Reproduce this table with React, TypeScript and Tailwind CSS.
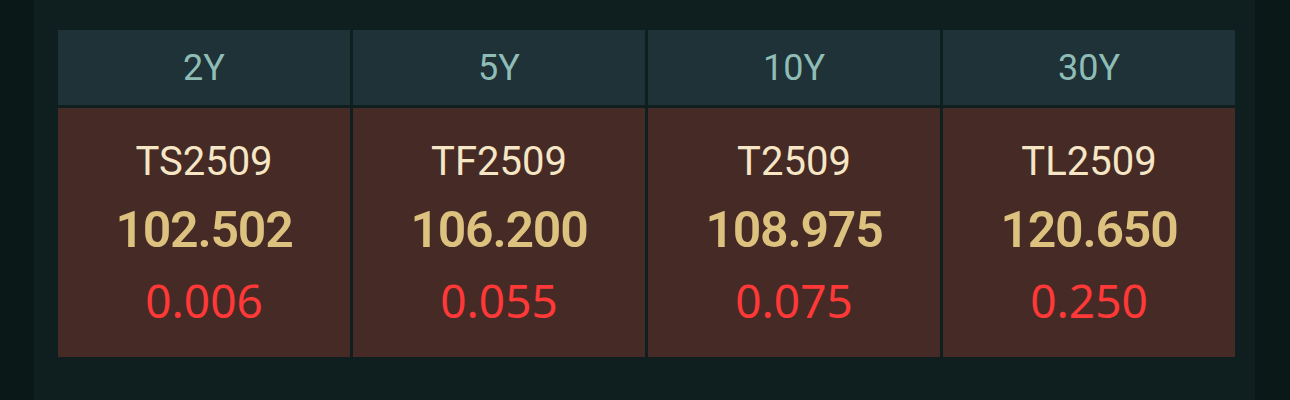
const bonds = [
  { tenor: "2Y", code: "TS2509", price: "102.502", change: "0.006" },
  { tenor: "5Y", code: "TF2509", price: "106.200", change: "0.055" },
  { tenor: "10Y", code: "T2509", price: "108.975", change: "0.075" },
  { tenor: "30Y", code: "TL2509", price: "120.650", change: "0.250" },
];

export default function App() {
  return (
    <div
      className="flex h-[400px] w-[1290px] bg-[#0a1818]"
      style={{ fontFamily: "Roboto, 'Noto Sans', sans-serif" }}
    >
      <div className="w-[34px] bg-[#0a1818]" />
      <div className="flex-1 bg-[#0f1e1e] pl-[24px] pr-[20px] pt-[30px]">
        <div className="grid grid-cols-4 gap-[3px]">
          {bonds.map((b) => (
            <div
              key={b.tenor}
              className="flex h-[75px] items-center justify-center bg-[#1e3238] text-[36px] text-[#8fbdb6]"
            >
              {b.tenor}
            </div>
          ))}
          {bonds.map((b) => (
            <div
              key={b.code}
              className="flex h-[249px] flex-col items-center bg-[#452a25] pt-[30px]"
            >
              <span className="text-[40px] leading-[48px] text-[#f6e6c6]">
                {b.code}
              </span>
              <span className="mt-[10px] text-[50px] font-semibold leading-[68px] tracking-[-1.2px] text-[#dcc17f]">
                {b.price}
              </span>
              <span className="font-['Noto_Sans',sans-serif] text-[46px] leading-[72px] text-[#ff3838]">
                {b.change}
              </span>
            </div>
          ))}
        </div>
      </div>
      <div className="w-[35px] bg-[#0a1818]" />
    </div>
  );
}
